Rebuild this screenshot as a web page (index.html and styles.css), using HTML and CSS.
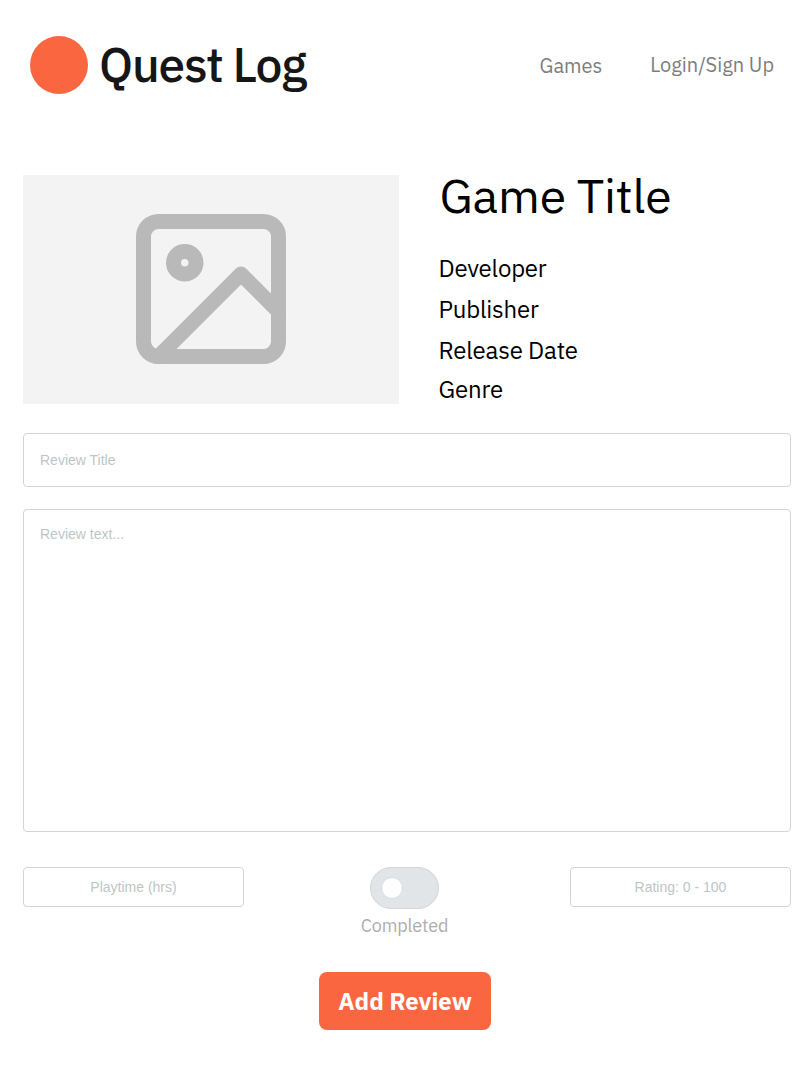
FILE: index.html
```html
<!DOCTYPE html>
<html lang="en">
<head>
<meta charset="utf-8">
<title>Quest Log</title>
<link rel="stylesheet" href="styles.css">
</head>
<body>
<header class="header">
  <span class="logo"></span>
  <h1 class="brand">Quest Log</h1>
  <nav class="nav">
    <a class="link games">Games</a>
    <a class="link login">Login/Sign Up</a>
  </nav>
</header>
<main class="main">
  <section class="game">
    <div class="cover">
      <svg class="cover-icon" viewBox="0 0 24 24" fill="none" stroke="#b9b9b9" stroke-width="2" stroke-linecap="round" stroke-linejoin="round">
        <rect x="3" y="3" width="18" height="18" rx="2"/>
        <circle cx="8.5" cy="8.5" r="1.5"/>
        <path d="M21 15l-5-5L5 21"/>
      </svg>
    </div>
    <div class="info">
      <h2 class="title">Game Title</h2>
      <p class="meta developer">Developer</p>
      <p class="meta publisher">Publisher</p>
      <p class="meta release">Release Date</p>
      <p class="meta genre">Genre</p>
    </div>
  </section>
  <form class="form">
    <input class="field review-title" placeholder="Review Title">
    <textarea class="field review-text" placeholder="Review text..."></textarea>
    <div class="options">
      <input class="field small" placeholder="Playtime (hrs)">
      <div class="status">
        <span class="toggle"><span class="knob"></span></span>
        <span class="status-label">Completed</span>
      </div>
      <input class="field small" placeholder="Rating: 0 - 100">
    </div>
    <button class="submit" type="button">Add Review</button>
  </form>
</main>
</body>
</html>
```
FILE: styles.css
```css
* { box-sizing: border-box; margin: 0; }
body {
  background: #fff;
  font-family: "IBM Plex Sans", "Open Sans", sans-serif;
  color: #000;
}
.header {
  display: flex;
  align-items: flex-start;
  height: 175px;
  padding: 36px 36px 0 30px;
}
.logo { width: 58px; height: 58px; border-radius: 50%; background: #f96640; }
.brand {
  margin-left: 11px;
  font-size: 48px;
  line-height: 56px;
  font-weight: 500;
  letter-spacing: -1.2px;
  color: #161616;
  white-space: nowrap;
}
.nav { display: flex; margin-left: auto; gap: 48px; white-space: nowrap; }
.link { font-size: 20px; line-height: 28px; color: #7d7d7d; }
.games { padding-top: 16px; }
.login { padding-top: 15px; }
.main { padding: 0 19px 0 23px; }
.game { display: flex; gap: 39.5px; height: 229px; }
.cover {
  display: flex;
  justify-content: center;
  width: 376px;
  height: 229px;
  padding-top: 24px;
  background: #f3f3f3;
}
.cover-icon { width: 180px; height: 180px; }
.info { white-space: nowrap; }
.title {
  padding-left: 1px;
  font-size: 48px;
  line-height: 40px;
  font-weight: 400;
  letter-spacing: -0.25px;
}
.meta { width: max-content; font-size: 24px; line-height: 32px; letter-spacing: -0.2px; }
.developer { margin-top: 37px; }
.publisher, .release { margin-top: 9px; }
.genre { margin-top: 7px; }
.form { display: flex; flex-direction: column; margin-top: 29px; }
.field {
  display: block;
  width: 100%;
  border: 1px solid #d2d5d8;
  border-radius: 4px;
  padding: 0 16px;
  background: #fff;
  font: 14px/20px "Liberation Sans", sans-serif;
  outline: none;
  resize: none;
}
.field::placeholder { color: #bdc6c6; opacity: 1; }
.review-title { height: 54px; }
.review-text { height: 323px; margin-top: 22px; padding-top: 14px; }
.options { display: flex; justify-content: space-between; height: 105px; margin-top: 35px; }
.small { width: 221px; height: 40px; text-align: center; }
.status { display: flex; flex-direction: column; align-items: center; margin-right: 5px; }
.toggle {
  display: flex;
  align-items: center;
  width: 69px;
  height: 42px;
  padding-left: 10px;
  border: 1px solid #d3d7da;
  border-radius: 21px;
  background: #e1e5e8;
}
.knob { width: 22px; height: 22px; border: 1px solid #d8dcdf; border-radius: 50%; background: #fff; }
.status-label {
  margin-top: 5px;
  font-size: 18px;
  line-height: 24px;
  letter-spacing: -0.15px;
  color: #adadad;
}
.submit {
  align-self: center;
  width: 172px;
  height: 58px;
  margin-right: 4px;
  padding: 0;
  border: 0;
  border-radius: 8px;
  background: #f96640;
  color: #fff;
  font: 700 24px/32px "IBM Plex Sans", "Open Sans", sans-serif;
  white-space: nowrap;
}
```
